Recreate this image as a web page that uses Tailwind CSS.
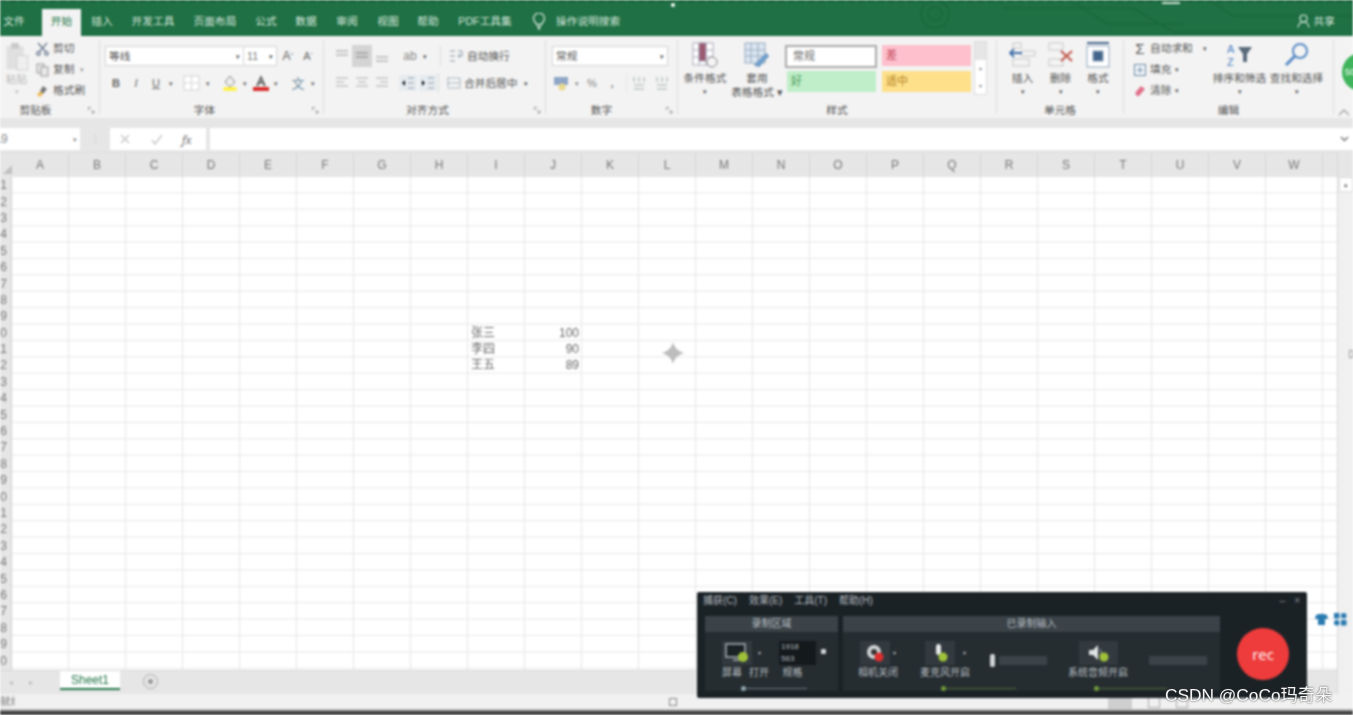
<!doctype html>
<html lang="zh-CN">
<head>
<meta charset="utf-8">
<title>Excel</title>
<script src="https://cdn.jsdelivr.net/npm/@tailwindcss/browser@4"></script>
</head>
<body class="bg-white">
<div class="relative w-[1353px] h-[715px] overflow-hidden font-['Liberation_Sans','Noto_Sans_CJK_SC',sans-serif]">
<div class="relative flex flex-col w-full h-full blur-[1px] text-[#555] text-[10.7px] leading-none">

  <!-- title / tabs -->
  <header class="relative h-[36px] shrink-0 bg-[#1f7044] flex items-end text-[#d5e6dc] border-t-2 border-dashed border-[#135a33] overflow-hidden">
    <svg class="absolute right-0 top-0 w-[470px] h-[34px]" viewBox="0 0 470 34" fill="none" stroke="#1b683d" stroke-width="1.5"><circle cx="52" cy="12" r="14"/><circle cx="52" cy="12" r="7"/><path d="M120 6H250L290 30H420M190 0L225 22H300M330 0L350 14H470"/></svg>
    <span class="absolute left-[671px] top-[1px] w-[4px] h-[4px] rounded-full bg-white"></span>
    <span class="absolute left-[1162px] top-0 w-[18px] h-[2px] bg-[#cfe3d6]"></span>
    <div class="relative flex items-center h-[25px] pb-[5px] w-full">
      <span class="w-[28px] text-center">文件</span><span class="w-[14px]"></span>
      <span class="w-[39px] h-[27px] -mb-[5px] self-end pb-[3px] bg-[#f3f3f3] text-[#217346] flex items-center justify-center">开始</span>
      <span class="w-[42px] text-center">插入</span>
      <span class="w-[60px] text-center">开发工具</span>
      <span class="w-[64px] text-center">页面布局</span>
      <span class="w-[38px] text-center">公式</span>
      <span class="w-[42px] text-center">数据</span>
      <span class="w-[40px] text-center">审阅</span>
      <span class="w-[42px] text-center">视图</span>
      <span class="w-[38px] text-center">帮助</span>
      <span class="w-[76px] text-center">PDF工具集</span>
      <svg class="ml-[9px] w-[14px] h-[17px]" viewBox="0 0 14 17" fill="none" stroke="#d5e6dc" stroke-width="1.3"><path d="M4.5 11.5C3.5 9 1.5 8 1.500 5.500a5.500 5.500 0 0 1 11 0c0 2.500-2 3.500-3 6zM5 14h4M6 16h2"/></svg>
      <span class="ml-[10px] w-[66px]">操作说明搜索</span>
      <span class="ml-auto mr-[18px] flex items-center gap-[4px]">
        <svg class="w-[13px] h-[14px]" viewBox="0 0 13 14" fill="none" stroke="#d5e6dc" stroke-width="1.200"><circle cx="6.500" cy="4.500" r="3.500"/><path d="M1 13.500c.5-3.500 2.500-5.500 5.500-5.500s5 2 5.500 5.500"/></svg>共享
      </span>
    </div>
  </header>

  <!-- ribbon -->
  <div class="relative h-[82px] shrink-0 bg-[#f3f3f3] flex">
    <!-- clipboard -->
    <section class="w-[99px] shrink-0 flex flex-col">
      <div class="h-[67px] flex pt-[2px]">
        <div class="w-[36px] pl-[3px] pr-[6px] flex flex-col items-center text-[#bbb]">
          <svg class="w-[24px] h-[31px] mt-[4px] shrink-0" viewBox="0 0 24 32"><rect x="1" y="4" width="18" height="24" rx="1" fill="#e0e0e0"/><rect x="6" y="1" width="8" height="6" fill="#cacaca"/><rect x="12" y="14" width="11" height="15" fill="#efefef" stroke="#d2d2d2"/></svg>
          <span class="mt-[1px]">粘贴</span><span class="text-[7px] mt-[3px]">▾</span>
        </div>
        <div class="flex flex-col">
          <div class="h-[21px] flex items-center gap-[4px]"><svg class="w-[13px] h-[14px]" viewBox="0 0 13 14" fill="none" stroke="#6a7a90" stroke-width="1.300"><path d="M2 1l8 9M11 1L3 10"/><circle cx="2.500" cy="11.500" r="1.800"/><circle cx="10.500" cy="11.500" r="1.800"/></svg>剪切</div>
          <div class="h-[21px] flex items-center gap-[4px]"><svg class="w-[13px] h-[14px]" viewBox="0 0 13 14" fill="#e9e9e9" stroke="#999"><rect x="1" y="1" width="7" height="9"/><rect x="5" y="4" width="7" height="9"/></svg>复制<span class="text-[7px] text-[#999] ml-[2px]">▾</span></div>
          <div class="h-[21px] flex items-center gap-[4px]"><svg class="w-[13px] h-[14px]" viewBox="0 0 13 14"><path d="M7 2l4 3-4 5-3-3z" fill="#777"/><path d="M4 7l3 3-3 3-3-2z" fill="#eebb55"/></svg>格式刷</div>
        </div>
      </div>
      <div class="h-[15px] pt-[2px] pr-[28px] flex justify-center relative"><span>剪贴板</span><svg class="absolute right-[4px] top-[4px] w-[7px] h-[7px]" viewBox="0 0 7 7" fill="none" stroke="#999"><path d="M.5 3V.5H3M3 3l3 3M6 3.500V6H3.500"/></svg></div>
    </section>
    <div class="w-px my-[4px] bg-[#dcdcdc]"></div>

    <!-- font -->
    <section class="w-[223px] shrink-0 flex flex-col">
      <div class="h-[67px] pt-[10px]">
        <div class="h-[20px] flex items-center pl-[5px]">
          <div class="w-[139px] h-[20px] bg-white border border-[#d5d5d5] flex items-center justify-between px-[3px]"><span>等线</span><span class="text-[7px]">▾</span></div>
          <div class="w-[33px] h-[20px] bg-white border border-[#d5d5d5] border-l-0 flex items-center justify-between px-[3px]"><span class="text-[#777]">11</span><span class="text-[7px]">▾</span></div>
          <span class="w-[20px] ml-[1px] text-center text-[12px] text-[#666]">A<sup class="text-[6px]">^</sup></span>
          <span class="w-[20px] text-center text-[11px] text-[#666]">A<sup class="text-[6px]">ˇ</sup></span>
        </div>
        <div class="h-[20px] mt-[7px] flex items-center pl-[6px] text-[11px] text-[#666]">
          <b class="w-[20px] text-center">B</b><i class="w-[20px] text-center">I</i><u class="w-[20px] text-center">U</u><span class="w-[10px] text-center text-[7px]">▾</span>
          <svg class="ml-[5px] w-[22px] h-[16px]" viewBox="0 0 22 16" fill="#fff" stroke="#c0c0c0"><rect x="3" y="1" width="15" height="14" stroke-dasharray="2 1"/><path d="M10.500 1v14M3 8h15" stroke-dasharray="2 1"/></svg>
          <span class="w-[10px] text-center text-[7px]">▾</span>
          <svg class="ml-[6px] w-[22px] h-[18px]" viewBox="0 0 22 18"><path d="M11 2l5 6-5 5-5-5z" fill="#eee" stroke="#888"/><rect x="4" y="13" width="14" height="4" rx="2" fill="#fff14a"/></svg>
          <span class="w-[8px] text-center text-[7px]">▾</span>
          <svg class="ml-[1px] w-[22px] h-[18px]" viewBox="0 0 22 18"><path d="M11 1l-5 11h2.500l1-2.500h3l1 2.500H16zM10.200 7.500L11 5l.8 2.500z" fill="#666" fill-rule="evenodd"/><rect x="3" y="13" width="16" height="4" fill="#d92c2c"/></svg>
          <span class="w-[8px] text-center text-[7px]">▾</span>
          <span class="w-[22px] ml-[7px] text-center text-[13px] text-[#6e8fa0]">文</span>
          <span class="w-[8px] text-center text-[7px]">▾</span>
        </div>
      </div>
      <div class="h-[15px] pt-[2px] pr-[14px] flex justify-center relative"><span>字体</span><svg class="absolute right-[4px] top-[4px] w-[7px] h-[7px]" viewBox="0 0 7 7" fill="none" stroke="#999"><path d="M.5 3V.5H3M3 3l3 3M6 3.500V6H3.500"/></svg></div>
    </section>
    <div class="w-px my-[4px] bg-[#dcdcdc]"></div>

    <!-- alignment -->
    <section class="w-[221px] shrink-0 flex flex-col">
      <div class="h-[67px] pt-[10px]">
        <div class="h-[20px] flex items-center pl-[8px]">
          <svg class="w-[20px] h-[20px]" viewBox="0 0 20 20" stroke="#c4c4c4" stroke-width="2"><path d="M4 5h12M4 9h12"/></svg>
          <svg class="w-[20px] h-[22px] bg-[#d4d4d4]" viewBox="0 0 20 22" stroke="#aaa" stroke-width="2"><path d="M4 8h12M4 12h12"/></svg>
          <svg class="w-[20px] h-[20px]" viewBox="0 0 20 20" stroke="#c4c4c4" stroke-width="2"><path d="M4 11h12M4 15h12"/></svg>
          <span class="ml-[8px] w-[20px] text-[12px] text-[#888] text-center">ab</span><span class="w-[10px] text-[7px] text-center">▾</span>
          <span class="w-px h-[20px] bg-[#dcdcdc] ml-[10px]"></span>
          <svg class="ml-[8px] w-[14px] h-[14px]" viewBox="0 0 14 14" fill="none" stroke="#8a9aaa"><path d="M1 2h5M1 7h5M1 12h5M9 2h4v5H9M11 5L9 7l2 2"/></svg>
          <span class="ml-[4px]">自动换行</span>
        </div>
        <div class="h-[20px] mt-[7px] flex items-center pl-[8px]">
          <svg class="w-[20px] h-[14px]" viewBox="0 0 20 14" stroke="#c4c4c4" stroke-width="1.500"><path d="M4 2h12M4 6h8M4 10h12"/></svg>
          <svg class="w-[20px] h-[14px]" viewBox="0 0 20 14" stroke="#c4c4c4" stroke-width="1.500"><path d="M4 2h12M6 6h8M4 10h12"/></svg>
          <svg class="w-[20px] h-[14px]" viewBox="0 0 20 14" stroke="#c4c4c4" stroke-width="1.500"><path d="M4 2h12M8 6h8M4 10h12"/></svg>
          <svg class="ml-[7px] w-[18px] h-[16px] bg-[#e6ebef]" viewBox="0 0 18 16" stroke="#8c9cac"><path d="M9 3h6M9 8h6M9 13h6M6 5L3 8l3 3"/></svg>
          <svg class="ml-[2px] w-[18px] h-[16px] bg-[#e6ebef]" viewBox="0 0 18 16" stroke="#8c9cac"><path d="M9 3h6M9 8h6M9 13h6M3 5l3 3-3 3"/></svg>
          <span class="w-px h-[20px] bg-[#dcdcdc] ml-[1px]"></span>
          <svg class="ml-[8px] w-[14px] h-[14px]" viewBox="0 0 14 14" fill="none" stroke="#8a9aaa" stroke-dasharray="2 1"><rect x="1" y="2" width="12" height="10"/><path d="M1 7h12"/></svg>
          <span class="ml-[3px] whitespace-nowrap">合并后居中</span><span class="ml-[7px] text-[7px]">▾</span>
        </div>
      </div>
      <div class="h-[15px] pt-[2px] pr-[14px] flex justify-center relative"><span>对齐方式</span><svg class="absolute right-[4px] top-[4px] w-[7px] h-[7px]" viewBox="0 0 7 7" fill="none" stroke="#999"><path d="M.5 3V.5H3M3 3l3 3M6 3.500V6H3.500"/></svg></div>
    </section>
    <div class="w-px my-[4px] bg-[#dcdcdc]"></div>

    <!-- number -->
    <section class="w-[131px] shrink-0 flex flex-col">
      <div class="h-[67px] pt-[10px]">
        <div class="ml-[6px] w-[116px] h-[20px] bg-white border border-[#d5d5d5] flex items-center justify-between px-[3px]"><span>常规</span><span class="text-[7px]">▾</span></div>
        <div class="h-[20px] mt-[7px] flex items-center pl-[7px] text-[#888]">
          <svg class="w-[18px] h-[16px]" viewBox="0 0 18 16"><rect x="1" y="2" width="14" height="8" fill="#8fa6c6"/><circle cx="9" cy="12" r="3.500" fill="#e9d98a"/></svg>
          <span class="w-[12px] text-center text-[7px]">▾</span>
          <span class="w-[20px] -ml-[1px] text-center text-[11px]">%</span>
          <span class="w-[20px] text-center text-[11px] font-bold">,</span>
          <span class="w-px h-[20px] bg-[#e6e6e6] ml-[4px]"></span>
          <svg class="ml-[4px] w-[18px] h-[14px]" viewBox="0 0 18 14" stroke="#a0aea6" fill="none"><path d="M3 1v5M8 1v5M13 1v5M3 9h10M3 13h10"/></svg>
          <svg class="ml-[3px] w-[18px] h-[14px]" viewBox="0 0 18 14" stroke="#a0aea6" fill="none"><path d="M5 1v5M10 1v5M15 1v5M5 9h10M5 13h10"/></svg>
        </div>
      </div>
      <div class="h-[15px] pt-[2px] pr-[20px] flex justify-center relative"><span>数字</span><svg class="absolute right-[4px] top-[4px] w-[7px] h-[7px]" viewBox="0 0 7 7" fill="none" stroke="#999"><path d="M.5 3V.5H3M3 3l3 3M6 3.500V6H3.500"/></svg></div>
    </section>
    <div class="w-px my-[4px] bg-[#dcdcdc]"></div>

    <!-- styles -->
    <section class="w-[318px] shrink-0 flex flex-col">
      <div class="h-[67px] flex pt-[5px]">
        <div class="w-[54px] flex flex-col items-center">
          <svg class="w-[28px] h-[28px] shrink-0" viewBox="0 0 28 28" fill="#fff" stroke="#aab"><rect x="2" y="2" width="20" height="22"/><path d="M8 2v22M15 2v22M2 9h20M2 16h20"/><rect x="8" y="2" width="7" height="18" fill="#9a5a70"/><circle cx="21" cy="21" r="5" fill="#f5f5f5" stroke="#888"/></svg>
          <span class="mt-[4px]">条件格式</span><span class="text-[7px] mt-[4px]">▾</span>
        </div>
        <div class="w-[50px] flex flex-col items-center">
          <svg class="w-[28px] h-[28px] shrink-0" viewBox="0 0 28 28" fill="#dbe6f2" stroke="#9ab"><rect x="2" y="2" width="20" height="20"/><path d="M8 2v20M15 2v20M2 9h20M2 15h20"/><path d="M11 24l12-12 3 3-10 11z" fill="#6e9fd0"/></svg>
          <span class="mt-[4px]">套用</span><span class="mt-[3px] whitespace-nowrap">表格格式 ▾</span>
        </div>
        <div class="ml-[3px] mt-[4px] w-[186px] self-start grid grid-cols-[92px_94px] grid-rows-[23px_21px] gap-y-[3px] text-[11px]">
          <span class="h-[23px] w-[92px] bg-white border-2 border-[#a9a9a9] flex items-center pl-[6px] text-[#666]">常规</span>
          <span class="h-[21px] w-[89px] ml-[5px] bg-[#fdc0cc] flex items-center pl-[4px] text-[#c5445a]">差</span>
          <span class="h-[21px] w-[89px] ml-[2px] bg-[#bfeec8] flex items-center pl-[4px] text-[#4a9a5a]">好</span>
          <span class="h-[21px] w-[89px] ml-[5px] bg-[#fee08a] flex items-center pl-[4px] text-[#b08020]">适中</span>
        </div>
        <div class="ml-[3px] w-[13px] h-[54px] border border-[#dcdcdc] flex flex-col text-[6px] text-[#888] bg-white">
          <span class="h-[18px] bg-[#e6e6e6]"></span><span class="h-[18px] flex items-center justify-center">▾</span><span class="h-[16px] flex items-center justify-center">▾</span>
        </div>
      </div>
      <div class="h-[15px] pt-[2px] flex justify-center"><span>样式</span></div>
    </section>
    <div class="w-px my-[4px] bg-[#dcdcdc]"></div>

    <!-- cells -->
    <section class="w-[126px] shrink-0 flex flex-col">
      <div class="h-[67px] flex pt-[6px] pl-[7px]">
        <div class="w-[37px] flex flex-col items-center">
          <svg class="w-[28px] h-[26px] shrink-0" viewBox="0 0 28 26" fill="none" stroke="#c8c8c8"><rect x="4" y="1" width="8" height="5"/><rect x="12" y="9" width="14" height="5"/><rect x="4" y="17" width="16" height="7"/><path d="M1 11h12M5 7l-4 4 4 4" stroke="#3f6ea8" stroke-width="1.800"/></svg>
          <span class="mt-[5px]">插入</span><span class="text-[7px] mt-[4px]">▾</span>
        </div>
        <div class="w-[39px] flex flex-col items-center">
          <svg class="w-[28px] h-[26px] shrink-0" viewBox="0 0 28 26" fill="none" stroke="#c8c8c8"><rect x="2" y="1" width="14" height="7"/><rect x="2" y="17" width="14" height="7"/><path d="M14 9l11 10M25 9L14 19" stroke="#c0554a" stroke-width="2"/></svg>
          <span class="mt-[5px]">删除</span><span class="text-[7px] mt-[4px]">▾</span>
        </div>
        <div class="w-[36px] flex flex-col items-center">
          <svg class="w-[26px] h-[26px] shrink-0" viewBox="0 0 26 26" fill="#fff" stroke="#8fa5bb"><rect x="2" y="4" width="22" height="21"/><rect x="8" y="9" width="10" height="10" fill="#44658a"/><path d="M2 1h22" stroke="#44658a" stroke-width="2"/></svg>
          <span class="mt-[5px]">格式</span><span class="text-[7px] mt-[4px]">▾</span>
        </div>
      </div>
      <div class="h-[15px] pt-[2px] flex justify-center"><span>单元格</span></div>
    </section>
    <div class="w-px my-[4px] bg-[#dcdcdc]"></div>

    <!-- editing -->
    <section class="w-[209px] shrink-0 flex flex-col">
      <div class="h-[67px] flex pt-[2px]">
        <div class="w-[94px] pl-[10px] flex flex-col">
          <div class="h-[21px] flex items-center gap-[4px]"><span class="w-[12px] text-[15px] text-[#555] text-center">Σ</span>自动求和<span class="text-[7px] ml-[6px]">▾</span></div>
          <div class="h-[21px] flex items-center gap-[4px]"><svg class="w-[12px] h-[12px]" viewBox="0 0 12 12" fill="#eef3f8" stroke="#6e8aa5"><rect x=".5" y=".5" width="11" height="11"/><path d="M6 3v6M3 6h6"/></svg>填充<span class="text-[7px]">▾</span></div>
          <div class="h-[21px] flex items-center gap-[4px]"><svg class="w-[12px] h-[12px]" viewBox="0 0 12 12"><path d="M1 8l6-7 4 3-6 7H3z" fill="#e0708a"/></svg>清除<span class="text-[7px]">▾</span></div>
        </div>
        <div class="w-[57px] pt-[4px] flex flex-col items-center -ml-[7px]">
          <svg class="w-[28px] h-[26px] shrink-0" viewBox="0 0 28 26" fill="none"><text x="1" y="11" font-size="11" fill="#4a7fc0" font-family="Liberation Sans">A</text><text x="1" y="24" font-size="11" fill="#4a7fc0" font-family="Liberation Sans">Z</text><path d="M12 5h14l-5 7v8h-4v-8z" fill="#5a6a7a"/></svg>
          <span class="mt-[5px] whitespace-nowrap">排序和筛选</span><span class="text-[7px] mt-[4px]">▾</span>
        </div>
        <div class="w-[57px] pt-[4px] flex flex-col items-center">
          <svg class="w-[28px] h-[26px] shrink-0" viewBox="0 0 28 26" fill="none" stroke="#5a8cc5" stroke-width="2"><circle cx="17" cy="9" r="7"/><path d="M12 14l-9 9" stroke-width="3"/></svg>
          <span class="mt-[5px] whitespace-nowrap">查找和选择</span><span class="text-[7px] mt-[4px]">▾</span>
        </div>
      </div>
      <div class="h-[15px] pt-[2px] flex justify-center"><span>编辑</span></div>
    </section>
    <div class="w-px my-[4px] bg-[#dcdcdc]"></div>
    <div class="flex-1 relative"><svg class="absolute right-[3px] bottom-[2px] w-[12px] h-[7px]" viewBox="0 0 12 7" fill="none" stroke="#aaa" stroke-width="1.500"><path d="M1 6l5-5 5 5"/></svg></div>
    <span class="absolute left-[1342px] top-[17px] w-[38px] h-[38px] rounded-full bg-[#3fb45c] text-white text-[9px] flex items-center pl-[3px]">50</span>
  </div>

  <!-- formula bar -->
  <div class="h-[34px] shrink-0 bg-[#e6e6e6] pt-[10px]">
    <div class="h-[22px] flex text-[#888]">
      <div class="w-[80px] bg-white flex items-center justify-between pr-[3px] overflow-hidden"><span class="-ml-[7px] text-[12px]">A9</span><span class="text-[7px]">▾</span></div>
      <div class="w-[30px] flex items-center justify-center text-[#bbb]">⋮</div>
      <div class="w-[96px] bg-white flex items-center text-[#aaa]">
        <svg class="ml-[9px] w-[12px] h-[12px]" viewBox="0 0 12 12" stroke="#c4c4c4" stroke-width="1.300"><path d="M2 2l8 8M10 2l-8 8"/></svg>
        <svg class="ml-[20px] w-[12px] h-[12px]" viewBox="0 0 12 12" fill="none" stroke="#c4c4c4" stroke-width="1.300"><path d="M1 7l3 4 7-9"/></svg>
        <i class="ml-[19px] text-[13px] font-serif text-[#777]">fx</i>
      </div>
      <div class="w-[4px]"></div>
      <div class="flex-1 bg-white flex items-center justify-end pr-[4px]"><svg class="w-[9px] h-[6px]" viewBox="0 0 9 6" fill="none" stroke="#777" stroke-width="1.500"><path d="M1 1l3.500 3.500L8 1"/></svg></div>
    </div>
  </div>

  <!-- sheet -->
  <div class="flex-1 min-h-0 flex relative">
    <div class="w-[1337px] flex flex-col">
      <div class="h-[25px] flex bg-[#e6e6e6] border-t border-[#e0e0e0] text-[12px] text-[#777] shrink-0">
        <div class="w-[12px] flex items-end justify-end pb-[3px]"><svg class="w-[9px] h-[9px]" viewBox="0 0 9 9"><path d="M9 0v9H0z" fill="#c0c0c0"/></svg></div>
        <div class="w-[57px] flex items-center justify-center border-r border-[#d5d5d5]">A</div><div class="w-[57px] flex items-center justify-center border-r border-[#d5d5d5]">B</div><div class="w-[57px] flex items-center justify-center border-r border-[#d5d5d5]">C</div><div class="w-[57px] flex items-center justify-center border-r border-[#d5d5d5]">D</div><div class="w-[57px] flex items-center justify-center border-r border-[#d5d5d5]">E</div><div class="w-[57px] flex items-center justify-center border-r border-[#d5d5d5]">F</div><div class="w-[57px] flex items-center justify-center border-r border-[#d5d5d5]">G</div><div class="w-[57px] flex items-center justify-center border-r border-[#d5d5d5]">H</div><div class="w-[57px] flex items-center justify-center border-r border-[#d5d5d5]">I</div><div class="w-[57px] flex items-center justify-center border-r border-[#d5d5d5]">J</div><div class="w-[57px] flex items-center justify-center border-r border-[#d5d5d5]">K</div><div class="w-[57px] flex items-center justify-center border-r border-[#d5d5d5]">L</div><div class="w-[57px] flex items-center justify-center border-r border-[#d5d5d5]">M</div><div class="w-[57px] flex items-center justify-center border-r border-[#d5d5d5]">N</div><div class="w-[57px] flex items-center justify-center border-r border-[#d5d5d5]">O</div><div class="w-[57px] flex items-center justify-center border-r border-[#d5d5d5]">P</div><div class="w-[57px] flex items-center justify-center border-r border-[#d5d5d5]">Q</div><div class="w-[57px] flex items-center justify-center border-r border-[#d5d5d5]">R</div><div class="w-[57px] flex items-center justify-center border-r border-[#d5d5d5]">S</div><div class="w-[57px] flex items-center justify-center border-r border-[#d5d5d5]">T</div><div class="w-[57px] flex items-center justify-center border-r border-[#d5d5d5]">U</div><div class="w-[57px] flex items-center justify-center border-r border-[#d5d5d5]">V</div><div class="w-[57px] flex items-center justify-center border-r border-[#d5d5d5]">W</div>
      </div>
      <div class="h-[493px] flex overflow-hidden shrink-0">
        <div class="w-[12px] shrink-0 bg-[#e6e6e6] border-r border-[#cfcfcf] grid grid-cols-[11px] auto-rows-[16.4px] text-[12px] text-[#777] overflow-hidden">
          <span class="flex justify-end items-center pr-[4px]">1</span><span class="flex justify-end items-center pr-[4px]">2</span><span class="flex justify-end items-center pr-[4px]">3</span><span class="flex justify-end items-center pr-[4px]">4</span><span class="flex justify-end items-center pr-[4px]">5</span><span class="flex justify-end items-center pr-[4px]">6</span><span class="flex justify-end items-center pr-[4px]">7</span><span class="flex justify-end items-center pr-[4px]">8</span><span class="flex justify-end items-center pr-[4px]">9</span><span class="flex justify-end items-center pr-[4px]">10</span><span class="flex justify-end items-center pr-[4px]">11</span><span class="flex justify-end items-center pr-[4px]">12</span><span class="flex justify-end items-center pr-[4px]">13</span><span class="flex justify-end items-center pr-[4px]">14</span><span class="flex justify-end items-center pr-[4px]">15</span><span class="flex justify-end items-center pr-[4px]">16</span><span class="flex justify-end items-center pr-[4px]">17</span><span class="flex justify-end items-center pr-[4px]">18</span><span class="flex justify-end items-center pr-[4px]">19</span><span class="flex justify-end items-center pr-[4px]">20</span><span class="flex justify-end items-center pr-[4px]">21</span><span class="flex justify-end items-center pr-[4px]">22</span><span class="flex justify-end items-center pr-[4px]">23</span><span class="flex justify-end items-center pr-[4px]">24</span><span class="flex justify-end items-center pr-[4px]">25</span><span class="flex justify-end items-center pr-[4px]">26</span><span class="flex justify-end items-center pr-[4px]">27</span><span class="flex justify-end items-center pr-[4px]">28</span><span class="flex justify-end items-center pr-[4px]">29</span><span class="flex justify-end items-center pr-[4px]">30</span>
        </div>
        <div class="flex-1 grid grid-cols-[repeat(23,57px)] auto-rows-[16.4px] text-[12px] text-[#666] bg-[linear-gradient(to_right,#e6e6e6_1px,transparent_1px),linear-gradient(to_bottom,#e6e6e6_1px,transparent_1px)] bg-[size:57px_16.4px] bg-[position:-1px_-1px]">
          <span class="col-start-9 row-start-10 flex items-center pl-[3px]">张三</span><span class="col-start-10 row-start-10 flex items-center justify-end pr-[3px]">100</span>
          <span class="col-start-9 row-start-11 flex items-center pl-[3px]">李四</span><span class="col-start-10 row-start-11 flex items-center justify-end pr-[3px]">90</span>
          <span class="col-start-9 row-start-12 flex items-center pl-[3px]">王五</span><span class="col-start-10 row-start-12 flex items-center justify-end pr-[3px]">89</span>
        </div>
      </div>
      <div class="h-[24px] bg-[#e6e6e6] border-t border-[#d8d8d8] flex text-[#bbb] shrink-0">
        <span class="w-[60px] flex items-center gap-[16px] pl-[9px] text-[8px]"><span>◂</span><span>▸</span></span>
        <span class="w-[60px] h-[19px] bg-white border-b-2 border-[#217346] text-[#217346] text-[12px] flex items-center justify-center">Sheet1</span>
        <span class="ml-[23px] mt-[3px] w-[15px] h-[15px] rounded-full border border-[#aaa] flex items-center justify-center"><span class="w-[5px] h-[5px] rounded-full bg-[#999]"></span></span>
      </div>
    </div>
    <div class="w-[16px] bg-[#f0f0f0] border-l border-[#d8d8d8] flex flex-col items-center">
      <span class="w-full h-[25px] bg-[#e6e6e6]"></span>
      <span class="w-[14px] h-[15px] bg-white border border-[#ddd] text-[7px] flex items-center justify-center text-[#666]">▴</span>
      <span class="mt-[158px] ml-[10px] w-[4px] h-[8px] border border-[#999] bg-white"></span>
    </div>
    <svg class="absolute left-[662px] top-[190px] w-[22px] h-[22px]" viewBox="0 0 24 24"><path d="M12 0c1.500 5 3.500 9 12 12-8.500 3-10.500 7-12 12-1.500-5-3.500-9-12-12 8.500-3 10.500-7 12-12z" fill="#bdbdbd"/></svg>
  </div>

  <!-- status bar -->
  <div class="h-[15px] shrink-0 bg-[#f1f1f1] flex items-center justify-end relative">
    <span class="absolute left-0 top-[2px] w-[15px] overflow-hidden text-[#777] whitespace-nowrap">就绪</span>
    <span class="absolute left-[669px] top-[4px] w-[8px] h-[8px] border border-[#888]"></span>
    <span class="mr-[165px] flex gap-[16px] items-center"><span class="w-[24px] h-[14px] bg-[#cfcfcf]"></span><span class="w-[12px] h-[12px] border border-[#aaa]"></span><span class="w-[12px] h-[12px] border border-[#aaa]"></span></span>
  </div>
  <div class="h-[2px] shrink-0 bg-[#b4b4b4]"></div>
  <div class="h-[4px] shrink-0 bg-[#3f3f3f]"></div>

  <!-- floating recorder -->
  <aside class="absolute left-[697px] top-[592px] w-[610px] h-[106px] rounded-[2px] bg-[#1b2226] text-[#b5bcc0] text-[10px] flex flex-col">
    <div class="h-[18px] flex items-center px-[6px] gap-[12px] shrink-0">
      <span>捕获(C)</span><span>效果(E)</span><span>工具(T)</span><span>帮助(H)</span>
      <span class="ml-auto mr-[1px] flex gap-[9px] text-[#8a9094]"><span>–</span><span>×</span></span>
    </div>
    <div class="flex pl-[8px] pt-[6px] gap-[5px]">
      <div class="w-[133px] flex flex-col bg-[#262d31]">
        <div class="h-[16px] bg-[#3b4348] flex items-center justify-center">录制区域</div>
        <div class="flex pl-[17px] pt-[9px]">
          <div class="w-[58px] flex flex-col">
            <div class="flex items-center h-[24px]"><span class="w-[30px] h-[24px] bg-[#333a3f] flex items-center justify-center"><svg class="w-[24px] h-[20px]" viewBox="0 0 24 20"><rect x="1" y="1" width="19" height="13" fill="#1b2226" stroke="#a9b0b4" stroke-width="1.500"/><path d="M8 17h8" stroke="#a9b0b4" stroke-width="1.500"/><circle cx="18" cy="14" r="5" fill="#9fc13a"/></svg></span><span class="ml-[6px] text-[6px]">▾</span></div>
            <div class="flex mt-[3px] gap-[7px] whitespace-nowrap"><span>屏幕</span><span>打开</span></div>
          </div>
          <div class="w-[37px] ml-[-1px] flex flex-col text-[8px] items-center">
            <span class="w-[37px] h-[12px] bg-[#14191c] flex items-center pl-[2px]">1918</span><span class="w-[37px] h-[12px] bg-[#14191c] flex items-center pl-[2px]">563</span>
            <span class="text-[10px] mt-[3px] -ml-[10px]">规格</span>
          </div>
          <span class="ml-[5px] mt-[8px] w-[5px] h-[5px] rounded-[1px] bg-[#cfd3d5]"></span>
        </div>
        <div class="mt-[8px] ml-[36px] flex items-center w-[66px]"><span class="w-[5px] h-[5px] rounded-full bg-[#8fa5ad]"></span><span class="flex-1 h-px bg-[#66757c]"></span></div>
      </div>
      <div class="w-[377px] flex flex-col bg-[#262d31]">
        <div class="h-[16px] bg-[#3b4348] flex items-center justify-center">已录制输入</div>
        <div class="flex pl-[11px] pt-[9px]">
          <div class="w-[48px] flex flex-col items-center">
            <span class="flex items-center h-[24px]"><span class="w-[30px] h-[24px] bg-[#333a3f] flex items-center justify-center"><svg class="w-[20px] h-[20px]" viewBox="0 0 20 20"><circle cx="9" cy="9" r="7" fill="#cfd3d5"/><circle cx="9" cy="9" r="3" fill="#333"/><circle cx="14" cy="14" r="4.500" fill="#dd2f2f"/></svg></span><span class="ml-[3px] text-[6px]">▾</span></span>
            <span class="mt-[3px] whitespace-nowrap">相机关闭</span>
          </div>
          <div class="ml-[19px] w-[48px] flex flex-col items-center">
            <span class="flex items-center h-[24px]"><span class="w-[30px] h-[24px] bg-[#333a3f] flex items-center justify-center"><svg class="w-[20px] h-[20px]" viewBox="0 0 20 20"><rect x="6" y="1" width="5" height="11" rx="2.500" fill="#e4e7e8"/><circle cx="13" cy="14" r="4.500" fill="#9fc13a"/></svg></span><span class="ml-[8px] text-[6px]">▾</span></span>
            <span class="mt-[3px] whitespace-nowrap">麦克风开启</span>
          </div>
          <div class="ml-[21px] w-[60px] h-[24px] flex items-center"><span class="w-[5px] h-[13px] mt-[14px] rounded-[2px] bg-[#cfd3d5]"></span><span class="ml-[4px] w-[48px] h-[9px] mt-[14px] bg-[#3c4449]"></span></div>
          <div class="ml-[19px] w-[58px] flex flex-col items-center">
            <span class="w-[39px] h-[24px] bg-[#333a3f] flex items-center justify-center"><svg class="w-[24px] h-[20px]" viewBox="0 0 24 20"><path d="M3 7h4l5-5v15l-5-5H3z" fill="#dfe3e4"/><path d="M14 6c1.500 2 1.500 5 0 7" fill="none" stroke="#aab" /><circle cx="18" cy="14" r="4.500" fill="#9fc13a"/></svg></span>
            <span class="mt-[3px] whitespace-nowrap">系统音频开启</span>
          </div>
          <div class="ml-[22px] w-[58px] h-[24px] flex items-center"><span class="w-full h-[9px] mt-[14px] bg-[#3c4449]"></span></div>
        </div>
        <div class="mt-[8px] flex items-center">
          <span class="ml-[98px] w-[5px] h-[5px] rounded-full bg-[#6f9a3a]"></span><span class="w-[70px] h-px bg-[#4e6a34]"></span>
          <span class="ml-[78px] w-[5px] h-[5px] rounded-full bg-[#6f9a3a]"></span><span class="w-[68px] h-px bg-[#4e6a34]"></span>
        </div>
      </div>
      <span class="ml-[12px] mt-[12px] w-[52px] h-[52px] rounded-full bg-[#ee3b3b] text-white text-[15px] flex items-center justify-center font-['Open_Sans',sans-serif]">rec</span>
    </div>
  </aside>

  <!-- floating mini icons -->
  <span class="absolute left-[1315px] top-[613px] flex gap-[6px] items-center">
    <svg class="w-[13px] h-[13px]" viewBox="0 0 13 13"><path d="M1 2l3-1h5l3 1 1 4h-3v6H3V6H0z" fill="#2a7ab0"/></svg>
    <svg class="w-[13px] h-[13px]" viewBox="0 0 13 13" fill="#2a7ab0"><rect width="5.500" height="5.500"/><rect x="7" width="5.500" height="5.500" rx="2.500"/><rect y="7" width="5.500" height="5.500" rx="2.500"/><rect x="7" y="7" width="5.500" height="5.500"/></svg>
  </span>
</div>
<span class="absolute left-[1165px] top-[685px] text-[17.3px] leading-[20px] text-[#f4f4f4] whitespace-nowrap [text-shadow:0_0_2px_#333]">CSDN @CoCo玛奇朵</span>
</div>
</body>
</html>
